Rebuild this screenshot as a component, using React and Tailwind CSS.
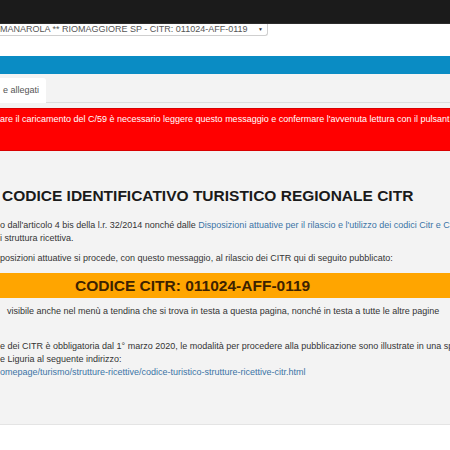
import React from 'react';

const bodyLines = {
    first: "o dall'articolo 4 bis della l.r. 32/2014 nonché dalle ",
    link: "Disposizioni attuative per il rilascio e l'utilizzo dei codici Citr e C",
};

const App = () => {
    return (
        <div className="w-[450px] h-[450px] overflow-hidden bg-white font-['Liberation_Sans',Arial,sans-serif]">
            {/* Top bar */}
            <div className="h-[24px] bg-[#1b1b1b] border-b border-[#2c2c2c]" />

            {/* Structure select */}
            <div className="h-[32px] bg-white">
                <div className="w-[268px] h-[12px] bg-white border-r border-b border-[#cfcfcf] rounded-br-[3px] flex items-start justify-between pr-[4px] overflow-hidden">
                    <span className="text-[9px] leading-[10px] text-[#555] whitespace-nowrap">
                        MANAROLA ** RIOMAGGIORE SP - CITR: 011024-AFF-0119
                    </span>
                    <span className="text-[5px] leading-[10px] text-[#333]">▼</span>
                </div>
            </div>

            {/* Blue nav bar */}
            <div className="h-[18px] bg-[#0a8cc4]" />

            {/* Content */}
            <div className="h-[351px] bg-[#f3f3f3] border-b border-[#e4e4e4] overflow-hidden">
                <div className="flex pt-[4px]">
                    <div className="w-[46px] h-[25px] bg-white rounded-tr-[3px] pl-[3px] flex items-center">
                        <span className="text-[9px] text-[#555] whitespace-nowrap">e allegati</span>
                    </div>
                    <div className="flex-1 border-b border-[#dcdcdc]" />
                </div>

                <div className="mt-[5px] h-[43px] bg-[#ff0000] border-y border-[#d80000] pt-[4px]">
                    <div className="text-[9px] leading-[13px] text-white whitespace-nowrap">
                        are il caricamento del C/59 è necessario leggere questo messaggio e confermare l'avvenuta lettura con il pulsant
                    </div>
                </div>

                <h1 className="mt-[35px] pl-[2px] text-[15.5px] leading-[20px] font-bold text-[#1a1a1a] whitespace-nowrap">
                    CODICE IDENTIFICATIVO TURISTICO REGIONALE CITR
                </h1>

                <div className="mt-[13px] text-[9px] leading-[13px] text-[#333] whitespace-nowrap">
                    <div>
                        {bodyLines.first}
                        <span className="text-[#3b73a6]">{bodyLines.link}</span>
                    </div>
                    <div>i struttura ricettiva.</div>
                    <div className="mt-[7px]">
                        posizioni attuative si procede, con questo messaggio, al rilascio dei CITR qui di seguito pubblicato:
                    </div>
                </div>

                <div className="mt-[8px] h-[25px] bg-[#ffa500] flex items-center pl-[75px]">
                    <span className="text-[15.5px] font-bold text-[#3d2200] whitespace-nowrap">
                        CODICE CITR: 011024-AFF-0119
                    </span>
                </div>

                <div className="mt-[7px] pl-[7px] text-[9px] leading-[13px] text-[#333] whitespace-nowrap">
                    visibile anche nel menù a tendina che si trova in testa a questa pagina, nonché in testa a tutte le altre pagine
                </div>

                <div className="mt-[22px] text-[9px] leading-[13px] text-[#333] whitespace-nowrap">
                    <div>e dei CITR è obbligatoria dal 1° marzo 2020, le modalità per procedere alla pubblicazione sono illustrate in una sp</div>
                    <div>e Liguria al seguente indirizzo:</div>
                    <div className="text-[#3b73a6]">
                        omepage/turismo/strutture-ricettive/codice-turistico-strutture-ricettive-citr.html
                    </div>
                </div>
            </div>
        </div>
    );
};

export default App;
